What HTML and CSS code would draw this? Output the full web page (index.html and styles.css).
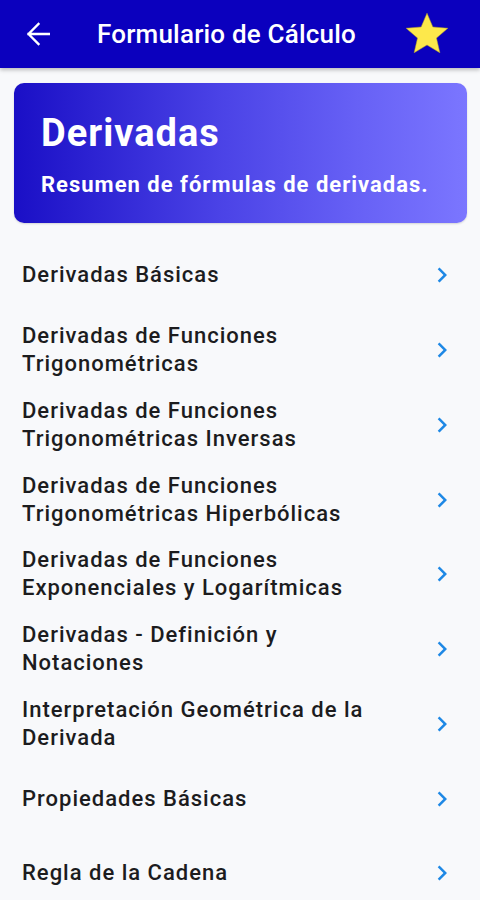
FILE: index.html
```html
<!DOCTYPE html>
<html lang="es">
<head>
<meta charset="utf-8">
<title>Formulario de Cálculo</title>
<link rel="stylesheet" href="styles.css">
</head>
<body>
<header class="appbar">
  <svg class="back" width="24" height="24" viewBox="0 0 24 24"><path d="M23 12H2.5M12.5 2L2.5 12l10 10" fill="none" stroke="#fff" stroke-width="2.3" stroke-linecap="square" stroke-linejoin="miter"/></svg>
  <h1 class="title">Formulario de Cálculo</h1>
  <svg class="star" width="50" height="50" viewBox="0 0 24 24"><path d="M12 17.27L18.18 21l-1.64-7.03L22 9.24l-7.19-.61L12 2 9.19 8.63 2 9.24l5.46 4.73L5.82 21z" fill="#fde84b" stroke="#b8a526" stroke-width="0.25" stroke-linejoin="round"/></svg>
</header>
<section class="hero">
  <h2 class="hero-title">Derivadas</h2>
  <p class="hero-sub">Resumen de fórmulas de derivadas.</p>
</section>
<ul class="list">
  <li class="item"><span class="label">Derivadas Básicas</span><svg class="chev" width="30" height="30" viewBox="0 0 24 24"><path d="M10 6 8.59 7.41 13.17 12l-4.58 4.59L10 18l6-6z" fill="#1e88e5"/></svg></li>
  <li class="item"><span class="label">Derivadas de Funciones Trigonométricas</span><svg class="chev" width="30" height="30" viewBox="0 0 24 24"><path d="M10 6 8.59 7.41 13.17 12l-4.58 4.59L10 18l6-6z" fill="#1e88e5"/></svg></li>
  <li class="item"><span class="label">Derivadas de Funciones Trigonométricas Inversas</span><svg class="chev" width="30" height="30" viewBox="0 0 24 24"><path d="M10 6 8.59 7.41 13.17 12l-4.58 4.59L10 18l6-6z" fill="#1e88e5"/></svg></li>
  <li class="item"><span class="label">Derivadas de Funciones Trigonométricas Hiperbólicas</span><svg class="chev" width="30" height="30" viewBox="0 0 24 24"><path d="M10 6 8.59 7.41 13.17 12l-4.58 4.59L10 18l6-6z" fill="#1e88e5"/></svg></li>
  <li class="item"><span class="label">Derivadas de Funciones Exponenciales y Logarítmicas</span><svg class="chev" width="30" height="30" viewBox="0 0 24 24"><path d="M10 6 8.59 7.41 13.17 12l-4.58 4.59L10 18l6-6z" fill="#1e88e5"/></svg></li>
  <li class="item"><span class="label">Derivadas - Definición y Notaciones</span><svg class="chev" width="30" height="30" viewBox="0 0 24 24"><path d="M10 6 8.59 7.41 13.17 12l-4.58 4.59L10 18l6-6z" fill="#1e88e5"/></svg></li>
  <li class="item"><span class="label">Interpretación Geométrica de la Derivada</span><svg class="chev" width="30" height="30" viewBox="0 0 24 24"><path d="M10 6 8.59 7.41 13.17 12l-4.58 4.59L10 18l6-6z" fill="#1e88e5"/></svg></li>
  <li class="item"><span class="label">Propiedades Básicas</span><svg class="chev" width="30" height="30" viewBox="0 0 24 24"><path d="M10 6 8.59 7.41 13.17 12l-4.58 4.59L10 18l6-6z" fill="#1e88e5"/></svg></li>
  <li class="item"><span class="label">Regla de la Cadena</span><svg class="chev" width="30" height="30" viewBox="0 0 24 24"><path d="M10 6 8.59 7.41 13.17 12l-4.58 4.59L10 18l6-6z" fill="#1e88e5"/></svg></li>
</ul>
</body>
</html>
```
FILE: styles.css
```css
* { box-sizing: border-box; }
html, body { margin: 0; padding: 0; }
body {
  background: #f8f9fb;
  font-family: Roboto, "Liberation Sans", sans-serif;
  color: #1d1d1f;
  width: 480px;
  height: 900px;
  overflow: hidden;
}
.appbar {
  height: 68px;
  background: #0b00be;
  display: flex;
  align-items: center;
  padding: 0 28px 0 26px;
  box-shadow: 0 2px 4px rgba(0,0,0,0.25);
  position: relative;
  z-index: 1;
}
.back { flex: none; }
.title {
  margin: 0 0 0 47px;
  flex: 1;
  color: #fff;
  font-size: 26px;
  font-weight: 500;
  letter-spacing: 0.2px;
}
.star { flex: none; }
.hero {
  margin: 15px 13px 0 14px;
  height: 140px;
  border-radius: 10px;
  background: linear-gradient(90deg, #1a0fc6 0%, #4a42e6 45%, #6660f5 75%, #7b76ff 100%);
  padding: 30px 0 0 27px;
  color: #fff;
  box-shadow: 0 1px 2px rgba(0,0,0,0.15);
}
.hero-title {
  margin: 0;
  font-size: 38px;
  font-weight: 700;
  line-height: 40px;
  letter-spacing: 1px;
}
.hero-sub {
  margin: 19px 0 0;
  font-size: 22px;
  font-weight: 700;
  line-height: 26px;
  letter-spacing: 1px;
}
.list {
  list-style: none;
  margin: 15px 0 0;
  padding: 0;
}
.item {
  height: 74.75px;
  display: flex;
  align-items: center;
  justify-content: space-between;
  padding: 0 23px 0 22px;
}
.label {
  font-size: 22px;
  font-weight: 500;
  line-height: 28px;
  letter-spacing: 1px;
  max-width: 375px;
  color: #1c1c1e;
}
.chev { flex: none; }
```
